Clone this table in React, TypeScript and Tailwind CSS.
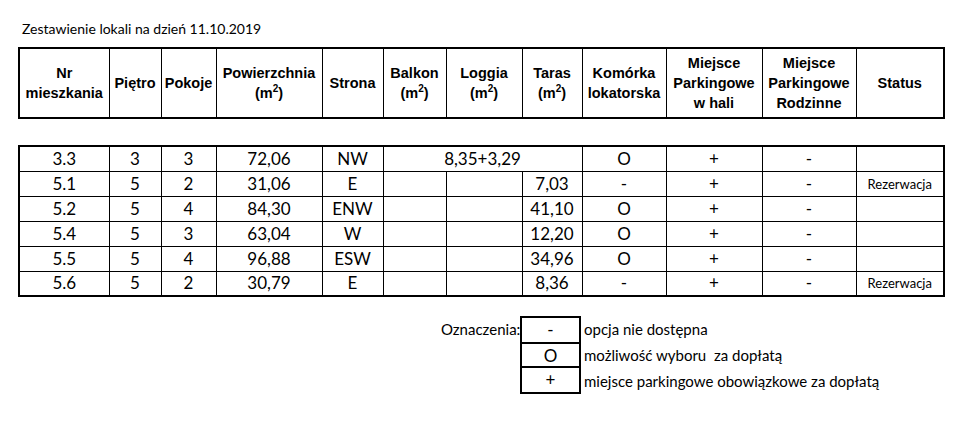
import React from "react";

type Row = {
  nr: string;
  pietro: string;
  pokoje: string;
  pow: string;
  strona: string;
  balkon?: string;
  loggia?: string;
  taras?: string;
  merged?: string;
  komorka: string;
  hala: string;
  rodzinne: string;
  status: string;
};

const ROWS: Row[] = [
  { nr: "3.3", pietro: "3", pokoje: "3", pow: "72,06", strona: "NW", merged: "8,35+3,29", komorka: "O", hala: "+", rodzinne: "-", status: "" },
  { nr: "5.1", pietro: "5", pokoje: "2", pow: "31,06", strona: "E", taras: "7,03", komorka: "-", hala: "+", rodzinne: "-", status: "Rezerwacja" },
  { nr: "5.2", pietro: "5", pokoje: "4", pow: "84,30", strona: "ENW", taras: "41,10", komorka: "O", hala: "+", rodzinne: "-", status: "" },
  { nr: "5.4", pietro: "5", pokoje: "3", pow: "63,04", strona: "W", taras: "12,20", komorka: "O", hala: "+", rodzinne: "-", status: "" },
  { nr: "5.5", pietro: "5", pokoje: "4", pow: "96,88", strona: "ESW", taras: "34,96", komorka: "O", hala: "+", rodzinne: "-", status: "" },
  { nr: "5.6", pietro: "5", pokoje: "2", pow: "30,79", strona: "E", taras: "8,36", komorka: "-", hala: "+", rodzinne: "-", status: "Rezerwacja" },
];

const LEGEND = [
  { sym: "-", text: "opcja nie dostępna" },
  { sym: "O", text: "możliwość wyboru  za dopłatą" },
  { sym: "+", text: "miejsce parkingowe obowiązkowe za dopłatą" },
];

function Cols() {
  return (
    <colgroup>
      <col className="w-[90px]" />
      <col className="w-[52px]" />
      <col className="w-[55px]" />
      <col className="w-[106px]" />
      <col className="w-[61px]" />
      <col className="w-[63px]" />
      <col className="w-[76px]" />
      <col className="w-[60px]" />
      <col className="w-[84px]" />
      <col className="w-[96px]" />
      <col className="w-[94px]" />
      <col className="w-[88px]" />
    </colgroup>
  );
}

function M2() {
  return (
    <>
      (m<sup className="text-[10px] -top-[0.6em]">2</sup>)
    </>
  );
}

const th = "border border-black p-0 text-center align-middle";
const td = "border border-black p-0 text-center h-[25px]";

export default function App() {
  return (
    <div className="w-[967px] h-[423px] bg-white text-black flex flex-col font-['Lato',sans-serif]">
      <div className="pt-[20px] pl-[22px] text-[14px] leading-[18px]">
        Zestawienie lokali na dzień 11.10.2019
      </div>

      {/* Nagłówek */}
      <table className="mt-[9px] ml-[18px] w-[925px] table-fixed border-collapse border-2 border-black font-['Liberation_Sans',Arial,sans-serif] font-bold text-[14.5px] leading-[20px]">
        <Cols />
        <tbody>
          <tr className="h-[70px]">
            <td className={th}>Nr<br />mieszkania</td>
            <td className={th}>Piętro</td>
            <td className={th}>Pokoje</td>
            <td className={th}>Powierzchnia<br /><M2 /></td>
            <td className={th}>Strona</td>
            <td className={th}>Balkon<br /><M2 /></td>
            <td className={th}>Loggia<br /><M2 /></td>
            <td className={th}>Taras<br /><M2 /></td>
            <td className={th}>Komórka<br />lokatorska</td>
            <td className={th}>Miejsce<br />Parkingowe<br />w hali</td>
            <td className={th}>Miejsce<br />Parkingowe<br />Rodzinne</td>
            <td className={th}>Status</td>
          </tr>
        </tbody>
      </table>

      {/* Dane */}
      <table className="mt-[26px] ml-[18px] w-[925px] table-fixed border-collapse border-2 border-black text-[17px] leading-[20px]">
        <Cols />
        <tbody>
          {ROWS.map((r) => (
            <tr key={r.nr}>
              <td className={td}>{r.nr}</td>
              <td className={td}>{r.pietro}</td>
              <td className={td}>{r.pokoje}</td>
              <td className={td}>{r.pow}</td>
              <td className={td}>{r.strona}</td>
              {r.merged ? (
                <td className={td} colSpan={3}>{r.merged}</td>
              ) : (
                <>
                  <td className={td}>{r.balkon}</td>
                  <td className={td}>{r.loggia}</td>
                  <td className={td}>{r.taras}</td>
                </>
              )}
              <td className={td}>{r.komorka}</td>
              <td className={td}>{r.hala}</td>
              <td className={td}>{r.rodzinne}</td>
              <td className={`${td} text-[13px]`}>{r.status}</td>
            </tr>
          ))}
        </tbody>
      </table>

      {/* Oznaczenia */}
      <div className="mt-[19px] ml-[441px] flex text-[15px]">
        <div className="w-[79px] leading-[26px]">Oznaczenia:</div>
        <div className="w-[61px] border-2 border-black flex flex-col">
          {LEGEND.map((l, i) => (
            <div
              key={l.sym}
              className={`h-[24px] leading-[24px] text-center text-[17px] ${i > 0 ? "border-t-2 border-black" : ""}`}
            >
              {l.sym}
            </div>
          ))}
        </div>
        <div className="flex flex-col pl-[3px]">
          {LEGEND.map((l) => (
            <div key={l.sym} className="h-[26px] leading-[26px] whitespace-pre">
              {l.text}
            </div>
          ))}
        </div>
      </div>
    </div>
  );
}
